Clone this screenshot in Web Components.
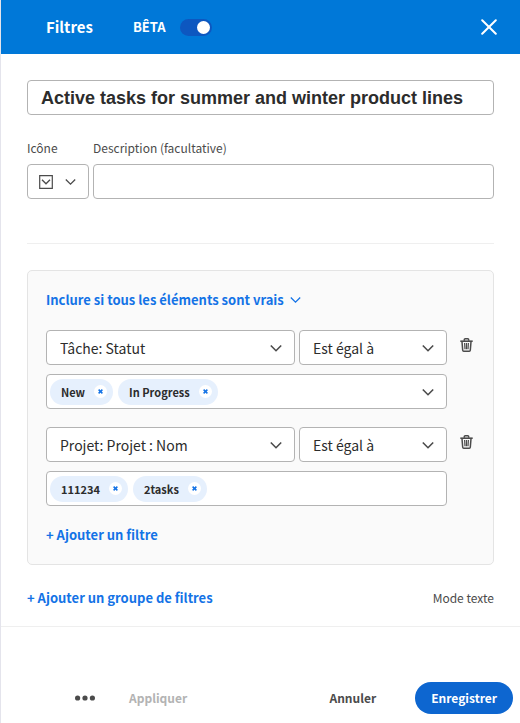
<!DOCTYPE html>
<html lang="fr">
<head>
<meta charset="utf-8">
<meta name="viewport" content="width=device-width, initial-scale=1">
<title>Filtres</title>
<style>
  html { height: 100%; }
  body {
    margin: 0;
    min-height: 100%;
    box-sizing: border-box;
    border-left: 1px solid #e4e4ec;
    background: #fff;
    color: #2c2c2c;
    font: 14px/20px "Noto Sans CJK SC", "Noto Sans", sans-serif;
    --blue: #1473e6;
    --line: #b3b3b3;
    --field-height: 35px;
  }
</style>
</head>
<body>
<filter-panel></filter-panel>
<script>
const define = (name, markup, setup) => {
  const template = document.createElement('template');
  template.innerHTML = markup;
  customElements.define(name, class extends HTMLElement {
    connectedCallback() {
      if (this.shadowRoot) return;
      const root = this.attachShadow({ mode: 'open' });
      root.append(template.content.cloneNode(true));
      if (setup) setup(this, root);
    }
  });
};

const ICONS = {
  chevron: [12, 8, '<path d="M.8 1.500 6 6.700l5.200-5.200" stroke-width="1.600"/>'],
  chevronThin: [11, 8, '<path d="M.8 1.500 5.500 6.200l4.700-4.700" stroke-width="1.300"/>'],
  close: [16, 16, '<path d="m1.200 1.200 13.600 13.600M14.800 1.200 1.200 14.800" stroke-width="2" stroke-linecap="round"/>'],
  cross: [5, 5, '<path d="m.6.6 3.800 3.800M4.400.6.6 4.400" stroke-width="1.500"/>'],
  box: [14, 14, '<path d="M.7.7h12.600v12.600H.7z" stroke-width="1.200"/><path d="m3 4.800 4 4 4-4" stroke-width="1.300"/>'],
  trash: [13, 14, '<path d="M.3 3.200h12.400" stroke-width="1.600"/><path d="M4.300 2.800V1.700Q4.300.8 5.200.8h2.600q.9 0 .9.900v1.100M2 3.800l.7 8.400q.1 1 1 1h5.600q.9 0 1-1l.7-8.400" stroke-width="1.500"/><path d="m4.600 5 .4 6.300M6.500 5v6.300M8.400 5 8 11.300" stroke-width="1.200"/>'],
  more: [20, 6, '<g fill="currentColor" stroke="none"><circle cx="2.600" cy="3" r="2.600"/><circle cx="10" cy="3" r="2.600"/><circle cx="17.400" cy="3" r="2.600"/></g>']
};

define('ui-icon', `
  <style>:host { display: block; flex: none; } svg { display: block; }</style>
`, (host, root) => {
  const [w, h, shape] = ICONS[host.getAttribute('name')];
  const holder = document.createElement('template');
  holder.innerHTML = `<svg width="${w}" height="${h}" viewBox="0 0 ${w} ${h}" fill="none" stroke="currentColor" aria-hidden="true">${shape}</svg>`;
  root.append(holder.content);
});

define('beta-switch', `
  <style>
    :host { display: block; }
    label { display: flex; align-items: center; gap: 14px; font-size: 13px; font-weight: 700; }
    input { appearance: none; margin: 0; width: 32px; height: 17px; border-radius: 9px; background: #0d57c0; display: grid; align-items: center; padding: 0 2px; box-sizing: border-box; }
    input::before { content: ""; width: 13px; height: 13px; border-radius: 50%; background: #fff; }
    input:checked::before { justify-self: end; }
  </style>
  <label><slot></slot><input type="checkbox" role="switch" checked></label>
`);

define('panel-header', `
  <style>
    :host { display: block; background: #0078d8; color: #fff; }
    header { display: flex; align-items: center; height: 54px; padding: 0 23px 0 45px; }
    h1 { margin: 0; font-size: 15px; line-height: 24px; font-weight: 700; }
    beta-switch { margin-left: 40px; }
    button { margin-left: auto; padding: 0; border: 0; background: none; color: inherit; }
  </style>
  <header>
    <h1><slot></slot></h1>
    <beta-switch>BÊTA</beta-switch>
    <button aria-label="Fermer"><ui-icon name="close"></ui-icon></button>
  </header>
`);

define('filter-identity', `
  <style>
    :host { display: block; }
    input, button { box-sizing: border-box; width: 100%; height: var(--field-height); border: 1px solid var(--line); border-radius: 4px; background: #fff; color: inherit; font: inherit; padding: 0 12px; }
    .name { font: 700 18px/24px "Liberation Sans", Arial, sans-serif; padding: 2px 13px 0; }
    .row { display: grid; grid-template-columns: 62px 1fr; column-gap: 4px; margin-top: 23px; padding-bottom: 44px; border-bottom: 1px solid #efefef; }
    label { font-size: 12px; line-height: 20px; margin-bottom: 6px; color: #4b4b4b; white-space: nowrap; }
    button { display: flex; align-items: center; gap: 12px; padding: 0 11px; color: #4b4b4b; }
  </style>
  <input class="name" aria-label="Nom du filtre" value="Active tasks for summer and winter product lines">
  <div class="row">
    <label for="icon">Icône</label>
    <label for="description">Description (facultative)</label>
    <button id="icon"><ui-icon name="box"></ui-icon><ui-icon name="chevronThin"></ui-icon></button>
    <input id="description">
  </div>
`);

define('ui-select', `
  <style>
    :host { display: grid; grid-template-columns: 1fr auto; align-items: center; min-width: 0; }
    select { grid-area: 1 / 1 / 2 / 3; appearance: none; box-sizing: border-box; width: 100%; height: var(--field-height); margin: 0; padding: 0 30px 0 13px; border: 1px solid var(--line); border-radius: 4px; background: #fff; color: inherit; font: inherit; }
    ui-icon { grid-area: 1 / 2; margin-right: 13px; color: #4b4b4b; pointer-events: none; }
  </style>
  <select><option></option></select><ui-icon name="chevron"></ui-icon>
`, (host, root) => {
  root.querySelector('option').textContent = host.getAttribute('value');
  root.querySelector('select').setAttribute('aria-label', host.getAttribute('label'));
});

define('filter-token', `
  <style>
    :host { display: flex; align-items: center; gap: 9px; height: 26px; padding: 0 6px 0 11px; border-radius: 13px; background: #e6f0fd; font-size: 11px; line-height: 20px; font-weight: 700; white-space: nowrap; }
    button { display: grid; place-items: center; width: 13px; height: 13px; padding: 0; border: 0; border-radius: 50%; background: #fff; color: var(--blue); }
  </style>
  <slot></slot><button aria-label="Retirer"><ui-icon name="cross"></ui-icon></button>
`);

define('token-field', `
  <style>
    :host { display: flex; align-items: center; gap: 5px; box-sizing: border-box; height: var(--field-height); padding: 0 12px 0 3px; border: 1px solid var(--line); border-radius: 4px; background: #fff; }
    button { margin-left: auto; padding: 0; border: 0; background: none; color: #4b4b4b; }
    :host(:not([menu])) button { display: none; }
  </style>
  <slot></slot><button aria-label="Ouvrir la liste"><ui-icon name="chevron"></ui-icon></button>
`);

define('filter-rule', `
  <style>
    :host { display: grid; grid-template-columns: 1fr 13px; column-gap: 13px; row-gap: 9px; }
    .pair { display: grid; grid-template-columns: 249fr 148fr; gap: 4px; }
    button { align-self: start; margin-top: 8px; padding: 0; border: 0; background: none; color: #4b4b4b; }
  </style>
  <div class="pair">
    <ui-select class="field" label="Champ"></ui-select>
    <ui-select value="Est égal à" label="Opérateur"></ui-select>
  </div>
  <button aria-label="Supprimer"><ui-icon name="trash"></ui-icon></button>
  <slot></slot>
`, (host, root) => {
  const field = root.querySelector('.field');
  const fresh = document.createElement('ui-select');
  fresh.setAttribute('label', 'Champ');
  fresh.setAttribute('value', host.getAttribute('field'));
  field.replaceWith(fresh);
});

define('text-action', `
  <style>
    :host { display: block; }
    button { display: flex; align-items: center; gap: 6px; padding: 0; border: 0; background: none; color: var(--blue); font: inherit; font-size: 13px; font-weight: 700; white-space: nowrap; }
    :host([quiet]) button { color: #4b4b4b; font-size: 12px; font-weight: 400; }
  </style>
  <button><slot></slot></button>
`);

define('filter-group', `
  <style>
    :host { display: grid; border: 1px solid #e4e4e4; border-radius: 5px; background: #fafafa; padding: 19px 20px 19px 18px; }
    .rules { display: grid; gap: 18px; margin: 20px 0 19px; }
  </style>
  <text-action>Inclure si tous les éléments sont vrais <ui-icon name="chevronThin"></ui-icon></text-action>
  <div class="rules"><slot></slot></div>
  <text-action>+ Ajouter un filtre</text-action>
`);

define('panel-footer', `
  <style>
    :host { display: block; border-top: 1px solid #efefef; }
    footer { display: flex; align-items: center; padding: 55px 7px 9px 74px; }
    button { padding: 0; border: 0; background: none; font: inherit; font-size: 12px; font-weight: 700; color: #4b4b4b; }
    .apply { margin-left: 34px; }
    .apply:disabled { color: #b3b3b3; }
    .cancel { margin-left: auto; }
    .save { height: 32px; margin-left: 39px; padding: 0 16px; border-radius: 16px; background: #0d66d0; color: #fff; }
  </style>
  <footer>
    <button aria-label="Plus d’actions"><ui-icon name="more"></ui-icon></button>
    <button class="apply" disabled>Appliquer</button>
    <button class="cancel">Annuler</button>
    <button class="save">Enregistrer</button>
  </footer>
`);

define('filter-panel', `
  <style>
    :host { display: block; }
    main { padding: 26px 26px 18px; }
    filter-group { margin: 26px 0 23px; }
    .links { display: flex; align-items: center; justify-content: space-between; }
  </style>
  <panel-header>Filtres</panel-header>
  <main>
    <filter-identity></filter-identity>
    <filter-group>
      <filter-rule field="Tâche: Statut">
        <token-field menu><filter-token>New</filter-token><filter-token>In Progress</filter-token></token-field>
      </filter-rule>
      <filter-rule field="Projet: Projet : Nom">
        <token-field><filter-token>111234</filter-token><filter-token>2tasks</filter-token></token-field>
      </filter-rule>
    </filter-group>
    <div class="links">
      <text-action>+ Ajouter un groupe de filtres</text-action>
      <text-action quiet>Mode texte</text-action>
    </div>
  </main>
  <panel-footer></panel-footer>
`);
</script>
</body>
</html>
